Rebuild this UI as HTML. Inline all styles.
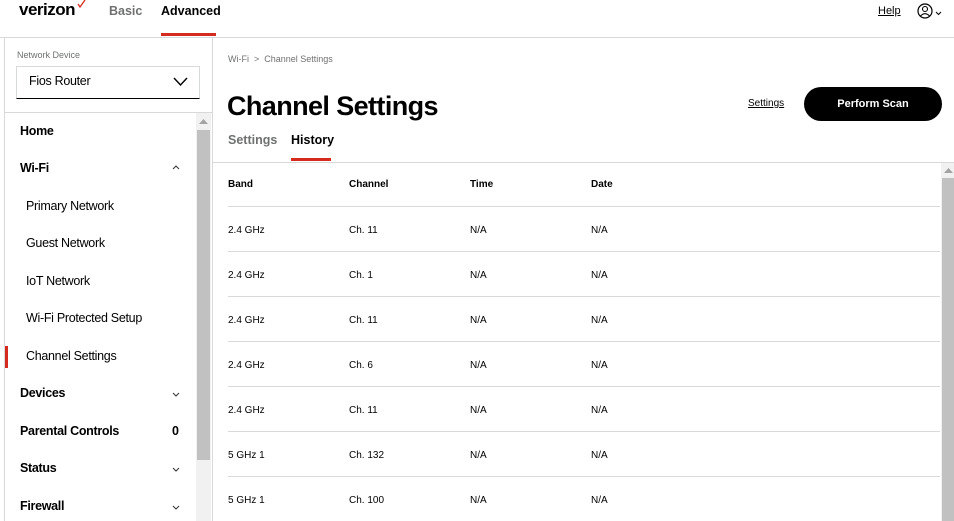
<!DOCTYPE html>
<html><head><style>
*{margin:0;padding:0;box-sizing:border-box}
body{width:954px;height:521px;overflow:hidden;background:#fff;font-family:"Liberation Sans",Arial,sans-serif;color:#000;position:relative}
.abs{position:absolute}
.b{font-weight:bold}
.row{position:absolute;left:228px;width:712px;border-top:1px solid #d8dada;height:45px;font-size:10px}
.row span{position:absolute;top:18px}
.nav{position:absolute;left:20px;font-size:12.5px;font-weight:bold;letter-spacing:-0.3px}
.sub{position:absolute;left:26px;font-size:12.5px;letter-spacing:-0.3px}
.chev{position:absolute;left:172px;top:0}
</style></head><body>
<div class="abs b" style="left:19px;top:0px;font-size:17px;letter-spacing:-0.5px">verizon</div>
<svg class="abs" style="left:77px;top:0" width="9" height="8"><path d="M1 4 L3 7 L8 0" stroke="#d52b1e" stroke-width="1.3" fill="none"/></svg>
<div class="abs b" style="left:109px;top:4px;font-size:12.5px;color:#6f7171">Basic</div>
<div class="abs b" style="left:161px;top:4px;font-size:12.5px">Advanced</div>
<div class="abs" style="left:161px;top:33px;width:55px;height:3px;background:#d52b1e"></div>
<div class="abs" style="left:878px;top:5px;font-size:11px;text-decoration:underline">Help</div>
<svg class="abs" style="left:917px;top:3px" width="28" height="16"><circle cx="8" cy="8" r="7" stroke="#000" stroke-width="1.2" fill="none"/><circle cx="8" cy="6" r="2.5" stroke="#000" stroke-width="1.1" fill="none"/><path d="M3.5 13 Q8 8.5 12.5 13" stroke="#000" stroke-width="1.1" fill="none"/><path d="M19 9 L21.5 11.5 L24 9" stroke="#000" fill="none"/></svg>
<div class="abs" style="left:0;top:37px;width:954px;height:1px;background:#d8dada"></div>
<div class="abs" style="left:4px;top:38px;width:1px;height:483px;background:#d8dada"></div>
<div class="abs" style="left:212px;top:38px;width:1px;height:483px;background:#d8dada"></div>
<div class="abs" style="left:17px;top:50px;font-size:9px;color:#6f7171">Network Device</div>
<div class="abs" style="left:16px;top:66px;width:184px;height:33px;border:1px solid #d8dada;border-bottom:1.5px solid #000"></div>
<div class="abs" style="left:29px;top:74px;font-size:12.5px;letter-spacing:-0.3px">Fios Router</div>
<svg class="abs" style="left:173px;top:77px" width="16" height="10"><path d="M1 1 L7.5 8 L14 1" stroke="#000" stroke-width="1.4" fill="none"/></svg>
<div class="abs" style="left:5px;top:112px;width:207px;height:1px;background:#d8dada"></div>
<div class="abs" style="left:196px;top:113px;width:15px;height:408px;background:#f1f1f1"></div>
<div class="abs" style="left:197px;top:130px;width:13px;height:330px;background:#c1c1c1"></div>
<svg class="abs" style="left:199px;top:119px" width="9" height="6"><path d="M0 5 L4.5 0 L9 5Z" fill="#a3a3a3"/></svg>
<div class="nav" style="top:124px">Home</div>
<div class="nav" style="top:161px">Wi-Fi</div><svg class="abs" style="left:172px;top:165px" width="8" height="5"><path d="M1 4 L4 1 L7 4" stroke="#333" fill="none"/></svg>
<div class="sub" style="top:199px">Primary Network</div>
<div class="sub" style="top:236px">Guest Network</div>
<div class="sub" style="top:274px">IoT Network</div>
<div class="sub" style="top:311px">Wi-Fi Protected Setup</div>
<div class="abs" style="left:5px;top:346px;width:3px;height:22px;background:#d52b1e"></div>
<div class="sub" style="top:349px">Channel Settings</div>
<div class="nav" style="top:386px">Devices</div><svg class="abs" style="left:172px;top:392px" width="8" height="5"><path d="M1 1 L4 4 L7 1" stroke="#333" fill="none"/></svg>
<div class="nav" style="top:424px">Parental Controls</div><div class="abs b" style="left:172px;top:424px;font-size:12.5px">0</div>
<div class="nav" style="top:461px">Status</div><svg class="abs" style="left:172px;top:467px" width="8" height="5"><path d="M1 1 L4 4 L7 1" stroke="#333" fill="none"/></svg>
<div class="nav" style="top:499px">Firewall</div><svg class="abs" style="left:172px;top:505px" width="8" height="5"><path d="M1 1 L4 4 L7 1" stroke="#333" fill="none"/></svg>
<div class="abs" style="left:228px;top:54px;font-size:9px;color:#6f7171">Wi-Fi &nbsp;&gt;&nbsp; Channel Settings</div>
<div class="abs b" style="left:227px;top:91px;font-size:27px;letter-spacing:-0.6px">Channel Settings</div>
<div class="abs" style="left:748px;top:98px;font-size:10px;text-decoration:underline">Settings</div>
<div class="abs b" style="left:804px;top:87px;width:138px;height:34px;border-radius:17px;background:#000;color:#fff;font-size:11px;text-align:center;line-height:34px">Perform Scan</div>
<div class="abs b" style="left:228px;top:133px;font-size:12.5px;color:#6f7171">Settings</div>
<div class="abs b" style="left:291px;top:133px;font-size:12.5px">History</div>
<div class="abs" style="left:291px;top:158px;width:40px;height:3px;background:#d52b1e"></div>
<div class="abs" style="left:213px;top:162px;width:741px;height:1px;background:#d8dada"></div>
<div class="abs" style="left:941px;top:163px;width:13px;height:358px;background:#f1f1f1"></div>
<div class="abs" style="left:942px;top:178px;width:12px;height:343px;background:#c1c1c1"></div>
<svg class="abs" style="left:944px;top:168px" width="9" height="6"><path d="M0 5 L4.5 0 L9 5Z" fill="#a3a3a3"/></svg>
<div class="abs b" style="left:228px;top:179px;font-size:10px">Band</div>
<div class="abs b" style="left:349px;top:179px;font-size:10px">Channel</div>
<div class="abs b" style="left:470px;top:179px;font-size:10px">Time</div>
<div class="abs b" style="left:591px;top:179px;font-size:10px">Date</div>
<div class="row" style="top:206px"><span style="left:0">2.4 GHz</span><span style="left:121px">Ch. 11</span><span style="left:242px">N/A</span><span style="left:363px">N/A</span></div>
<div class="row" style="top:251px"><span style="left:0">2.4 GHz</span><span style="left:121px">Ch. 1</span><span style="left:242px">N/A</span><span style="left:363px">N/A</span></div>
<div class="row" style="top:296px"><span style="left:0">2.4 GHz</span><span style="left:121px">Ch. 11</span><span style="left:242px">N/A</span><span style="left:363px">N/A</span></div>
<div class="row" style="top:341px"><span style="left:0">2.4 GHz</span><span style="left:121px">Ch. 6</span><span style="left:242px">N/A</span><span style="left:363px">N/A</span></div>
<div class="row" style="top:386px"><span style="left:0">2.4 GHz</span><span style="left:121px">Ch. 11</span><span style="left:242px">N/A</span><span style="left:363px">N/A</span></div>
<div class="row" style="top:431px"><span style="left:0">5 GHz 1</span><span style="left:121px">Ch. 132</span><span style="left:242px">N/A</span><span style="left:363px">N/A</span></div>
<div class="row" style="top:476px"><span style="left:0">5 GHz 1</span><span style="left:121px">Ch. 100</span><span style="left:242px">N/A</span><span style="left:363px">N/A</span></div>
</body></html>
